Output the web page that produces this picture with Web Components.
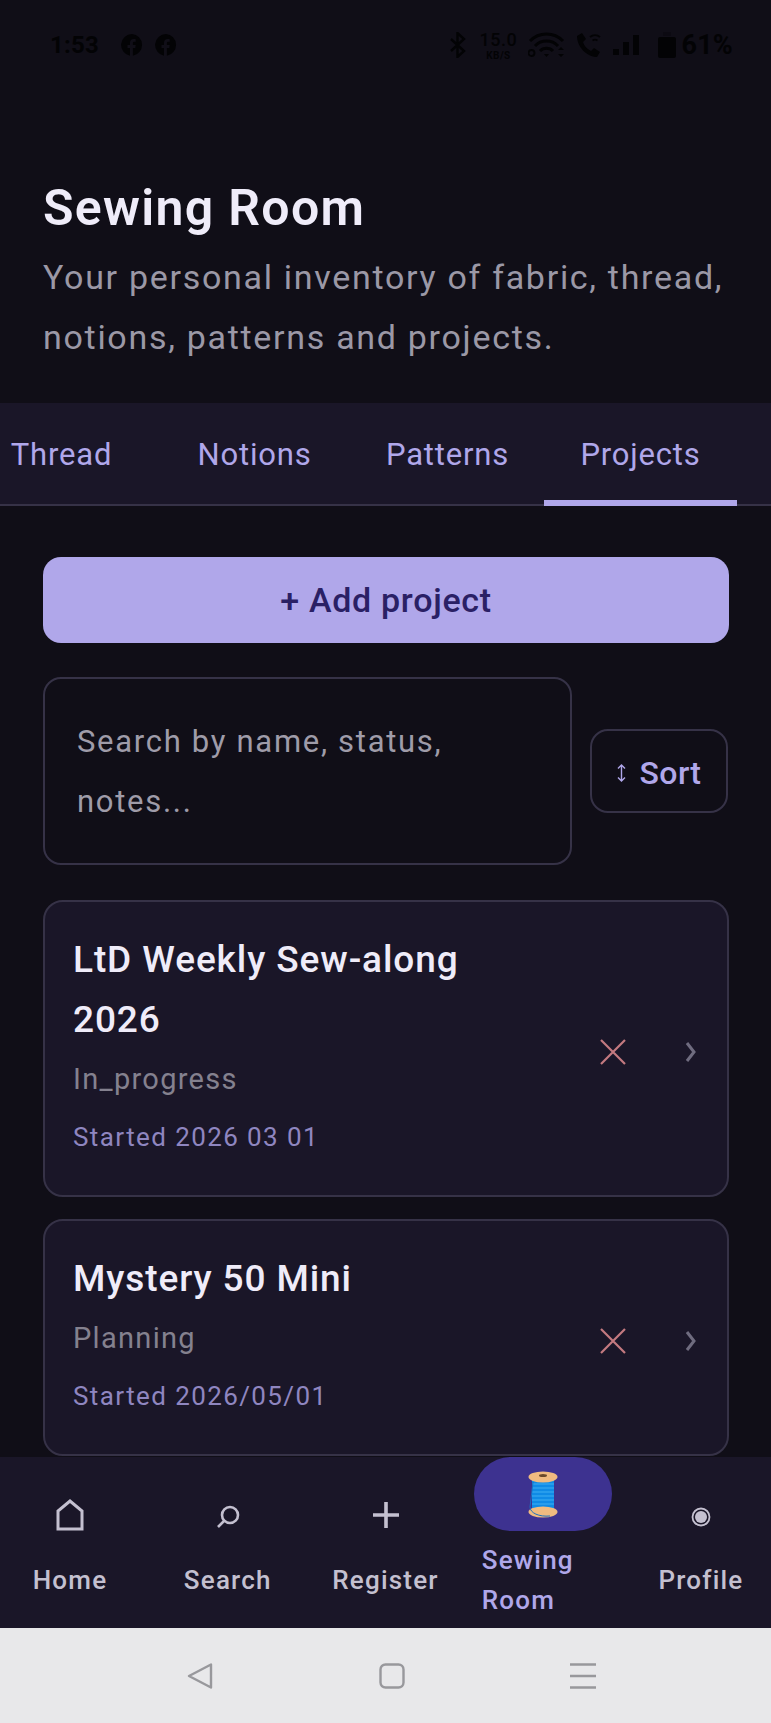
<!DOCTYPE html>
<html lang="en"><head><meta charset="utf-8"><title>Sewing Room</title>
<style>
html,body{margin:0;padding:0;background:#100e17}
body{width:771px;height:1723px;overflow:hidden;font-family:Roboto,"Noto Sans",sans-serif}
sew-app{display:flex}
</style></head><body>
<sew-app>
  <status-bar slot="status"></status-bar>
  <page-header slot="header" heading="Sewing Room">Your personal inventory of fabric, thread, notions, patterns and projects.</page-header>
  <tab-strip slot="tabs">
    <tab-item>Thread</tab-item><tab-item>Notions</tab-item><tab-item>Patterns</tab-item><tab-item active>Projects</tab-item>
  </tab-strip>
  <add-button>+ Add project</add-button>
  <search-row placeholder="Search by name, status, notes..."></search-row>
  <project-list>
    <project-card>LtD Weekly Sew-along 2026<span slot="status">In_progress</span><span slot="date">Started 2026 03 01</span></project-card>
    <project-card>Mystery 50 Mini<span slot="status">Planning</span><span slot="date">Started 2026/05/01</span></project-card>
  </project-list>
  <bottom-nav slot="nav"></bottom-nav>
  <system-nav slot="sys"></system-nav>
</sew-app>
<script>
const def=(name,html)=>customElements.define(name,class extends HTMLElement{
  constructor(){super();this.attachShadow({mode:'open'}).innerHTML=typeof html==='function'?html(this):html;}
});
def('sew-app',`<style>
:host{display:flex;flex-direction:column;width:771px;height:1723px;background:#100e17;overflow:hidden}
.content{flex:1;min-height:0;overflow:hidden;padding:51px 42px 0 43px;display:flex;flex-direction:column;gap:34px}
</style>
<slot name="status"></slot><slot name="header"></slot><slot name="tabs"></slot>
<div class="content"><slot></slot></div>
<slot name="nav"></slot><slot name="sys"></slot>`);
def('project-list',`<style>:host{display:flex;flex:none;flex-direction:column;gap:22px;padding-top:1px}</style><slot></slot>`);
def('status-bar',`<style>
:host{display:flex;align-items:center;justify-content:space-between;height:88px;box-sizing:border-box;padding:1px 38px 0 50px;color:#030305;font-family:Roboto,sans-serif;font-weight:700}
.g{display:flex;align-items:center}
.t{font-size:24px;letter-spacing:.2px;line-height:28px}
svg{display:block}
.sp{display:flex;flex-direction:column;align-items:center;width:38px;margin:0 11px 0 13px}
.sp b{display:block;font-size:18px;font-weight:500;line-height:normal;letter-spacing:.5px}.sp i{display:block;font-style:normal;font-size:10px;line-height:normal;font-weight:700;letter-spacing:.5px}
</style>
<div class="g"><span class="t">1:53</span>
<svg style="margin-left:22px" width="22" height="22" viewBox="0 0 22 22"><path fill="#030305" d="M11 0a11 11 0 0 0-2 21.8V14H6.500v-3H9V8.800C9 6.300 10.400 5 12.700 5c1 0 1.800.1 2 .2v2.600h-1.400c-1.100 0-1.400.6-1.400 1.400V11h2.800l-.4 3h-2.400v7.800A11 11 0 0 0 11 0z"/></svg>
<svg style="margin-left:12px" width="22" height="22" viewBox="0 0 22 22"><path fill="#030305" d="M11 0a11 11 0 0 0-2 21.800V14H6.500v-3H9V8.800C9 6.300 10.400 5 12.700 5c1 0 1.800.1 2 .2v2.600h-1.400c-1.100 0-1.400.6-1.400 1.400V11h2.800l-.4 3h-2.400v7.800A11 11 0 0 0 11 0z"/></svg></div>
<div class="g">
<svg width="17" height="26" viewBox="0 0 17 26"><path fill="none" stroke="#030305" stroke-width="2.400" d="M2 7l13 12-6.500 6V1L15 7 2 19"/></svg>
<span class="sp"><b>15.0</b><i>KB/S</i></span>
<svg width="37" height="26" viewBox="0 0 37 26"><g fill="none" stroke="#030305" stroke-width="3"><path d="M2 9a23 23 0 0 1 33 0M7 14a16 16 0 0 1 23 0M12 19a9 9 0 0 1 13 0"/></g><path fill="#030305" d="M16 22h5l-2.500 3zM33 15l3 3h-6zM33 25l3-3h-6z"/><circle cx="3.500" cy="21" r="3" fill="none" stroke="#030305" stroke-width="1.800"/></svg>
<svg style="margin-left:11px" width="26" height="26" viewBox="0 0 26 26"><path fill="#030305" d="M1 4l5-3 4 6-3 3c1 4 4 7 8 9l3-3 6 4-3 5C11 25 1 15 1 4z"/><path fill="none" stroke="#030305" stroke-width="1.800" d="M14 5a8 8 0 0 1 10 0M16.500 8.500a4.500 4.500 0 0 1 5 0"/></svg>
<svg style="margin-left:11px" width="26" height="20" viewBox="0 0 26 20"><path fill="#030305" d="M0 14h6v6H0zM10 7h6v13h-6zM20 0h6v20h-6z"/></svg>
<svg style="margin-left:19px" width="18" height="26" viewBox="0 0 18 26"><rect x="5" y="0" width="8" height="4" fill="#030305" opacity=".3"/><rect y="5" width="18" height="21" rx="2" fill="#030305"/></svg>
<span class="t" style="margin-left:5px;font-size:27px">61%</span></div>`);
def('page-header',h=>`<style>
:host{display:block;padding:95px 43px 36px}
h1{margin:0 0 14px;font:600 50px/50px Roboto,sans-serif;letter-spacing:1.300px;color:#efecf9;white-space:nowrap}
p{margin:0;font:400 34px/60px Roboto,sans-serif;letter-spacing:1.700px;color:#9b98a6}
</style><h1>${h.getAttribute('heading')}</h1><p><slot></slot></p>`);
def('tab-strip',`<style>
:host{display:flex;justify-content:flex-end;height:103px;box-sizing:border-box;padding-right:34px;background:#1a1628;box-shadow:inset 0 -2px #363247;overflow:hidden}
</style><slot></slot>`);
def('tab-item',`<style>
:host{flex:none;width:193px;box-sizing:border-box;height:103px;display:flex;align-items:center;justify-content:center;border-top:6px solid transparent;border-bottom:6px solid transparent;font:400 31px/40px Roboto,sans-serif;letter-spacing:.8px;color:#b0a7ea}
:host([active]){border-bottom-color:#b0a7ea}
</style><slot></slot>`);
def('add-button',`<style>
:host{display:flex;flex:none;align-items:center;justify-content:center;height:86px;border-radius:18px;background:#b0a7ea;color:#2a2065;font:500 34px/40px Roboto,sans-serif;letter-spacing:.7px}
</style><slot></slot>`);
def('search-row',h=>`<style>
:host{display:flex;flex:none;align-items:center;gap:18px}
.s{width:529px;flex:none;box-sizing:border-box;height:188px;padding:33px 32px;border:2px solid #363247;border-radius:18px;font:400 31px/60px Roboto,sans-serif;letter-spacing:1.700px;color:#9f9ca9}
.b{width:138px;flex:none;height:84px;box-sizing:border-box;padding-top:3px;border:2px solid #363247;border-radius:18px;display:flex;align-items:center;justify-content:center;gap:14px;color:#b0a7ea;font:500 32px/40px Roboto,sans-serif;letter-spacing:.4px}
.b svg{display:block;flex:none}
</style><div class="s">${h.getAttribute('placeholder')}</div>
<div class="b"><svg width="9" height="18" viewBox="0 0 9 18" fill="none" stroke="#b0a7ea" stroke-width="1.400"><path d="M4.500 1v16M1 4.500L4.500 1 8 4.500M1 13.500L4.500 17 8 13.500"/></svg><span>Sort</span></div>`);
def('project-card',`<style>
:host{display:flex;flex:none;align-items:center;box-sizing:border-box;padding:27.500px 28px 29.500px;background:#1a1628;border:2px solid #363247;border-radius:20px}
.m{flex:1;min-width:0}
.t{width:430px;font:500 37px/60px Roboto,sans-serif;letter-spacing:.9px;color:#efecf9}
.st{font:400 29px/58px Roboto,sans-serif;letter-spacing:1.300px;color:#84818f}
.d{font:400 26px/58px Roboto,sans-serif;letter-spacing:1.400px;color:#8f86c0}
svg{display:block;flex:none;margin-top:8px}
</style><div class="m"><div class="t"><slot></slot></div><div class="st"><slot name="status"></slot></div><div class="d"><slot name="date"></slot></div></div>
<svg width="28" height="28" viewBox="0 0 28 28" fill="none" stroke="#c47a80" stroke-width="2.200"><path d="M2 2l24 24M26 2L2 26"/></svg>
<svg style="margin:8px 3px 0 58px" width="11" height="20" viewBox="0 0 11 20" fill="none" stroke="#6f6c7f" stroke-width="3"><path d="M2 1l7 9-7 9"/></svg>`);
def('nav-item',h=>`<style>
:host{display:flex;flex-direction:column;align-items:center;height:171px;box-sizing:border-box;color:#c4c0d0;font:500 26px/40px Roboto,sans-serif;letter-spacing:1.200px}
.i{height:74px;width:138px;margin-bottom:29px;display:flex;align-items:flex-end;justify-content:center;flex:none;border-radius:37px}
:host([active]) .i{background:#3d3290;margin-bottom:9px;align-items:center}
:host([active]){color:#b0a7ea}
.l{text-align:center}
:host([active]) .l{width:123px;text-align:left}
</style><div class="i"><slot name="icon"></slot></div><div class="l"><slot></slot></div>`);
def('bottom-nav',`<style>
:host{display:grid;flex:none;grid-template-columns:repeat(5,157.75px);justify-content:center;height:171px;background:#1a1628;overflow:hidden}
svg{display:block}
</style>
<nav-item><svg slot="icon" width="28" height="32" viewBox="0 0 28 32" fill="none" stroke="#c4c0d0" stroke-width="3"><path d="M2 30V12L14 2l12 10v18z"/></svg>Home</nav-item>
<nav-item><svg slot="icon" style="margin-bottom:2px" width="24" height="24" viewBox="0 0 24 24" fill="none" stroke="#c4c0d0" stroke-width="2.600"><circle cx="14" cy="10" r="8"/><path d="M8 16l-6 6"/></svg>Search</nav-item>
<nav-item><svg slot="icon" style="margin-bottom:3px" width="26" height="26" viewBox="0 0 26 26" fill="none" stroke="#c4c0d0" stroke-width="3.600"><path d="M13 0v26M0 13h26"/></svg>Register</nav-item>
<nav-item active><svg slot="icon" width="30" height="47" viewBox="0 0 30 47"><path d="M4 9h22v29H4z" fill="#0f8be6"/><path d="M4 13h22M4 17h22M4 21h22M4 25h22M4 29h22M4 33h22" stroke="#3eaef2" stroke-width="1"/><ellipse cx="15" cy="6" rx="14.500" ry="5.500" fill="#f0bb80"/><ellipse cx="15" cy="41" rx="14.500" ry="5.500" fill="#f0bb80"/><ellipse cx="15" cy="4.500" rx="4" ry="1.500" fill="#6b4a2a"/><path d="M5 11L2 36c0 6 9 10 20 9" fill="none" stroke="#1a6fc0" stroke-width="1"/></svg>Sewing Room</nav-item>
<nav-item><svg slot="icon" style="margin-bottom:4px" width="20" height="20" viewBox="0 0 20 20"><circle cx="10" cy="10" r="8.500" fill="none" stroke="#c4c0d0" stroke-width="1.800"/><circle cx="10" cy="10" r="6" fill="#c4c0d0"/></svg>Profile</nav-item>`);
def('system-nav',`<style>
:host{display:flex;flex:none;box-sizing:border-box;height:95px;background:#e8e8ea;padding:35px 175px 0 187px;justify-content:space-between;align-items:flex-start}
svg{display:block}
</style>
<svg width="26" height="26" viewBox="0 0 26 26" fill="none" stroke="#98989c" stroke-width="2.400" stroke-linejoin="round"><path d="M24 1.500v23L2 13z"/></svg>
<svg width="26" height="26" viewBox="0 0 26 26" fill="none" stroke="#98989c" stroke-width="2.400"><rect x="1.500" y="1.500" width="23" height="23" rx="5"/></svg>
<svg width="26" height="26" viewBox="0 0 26 26" fill="none" stroke="#98989c" stroke-width="2.400"><path d="M0 1.500h26M0 13h26M0 24.500h26"/></svg>`);
</script>
</body></html>
